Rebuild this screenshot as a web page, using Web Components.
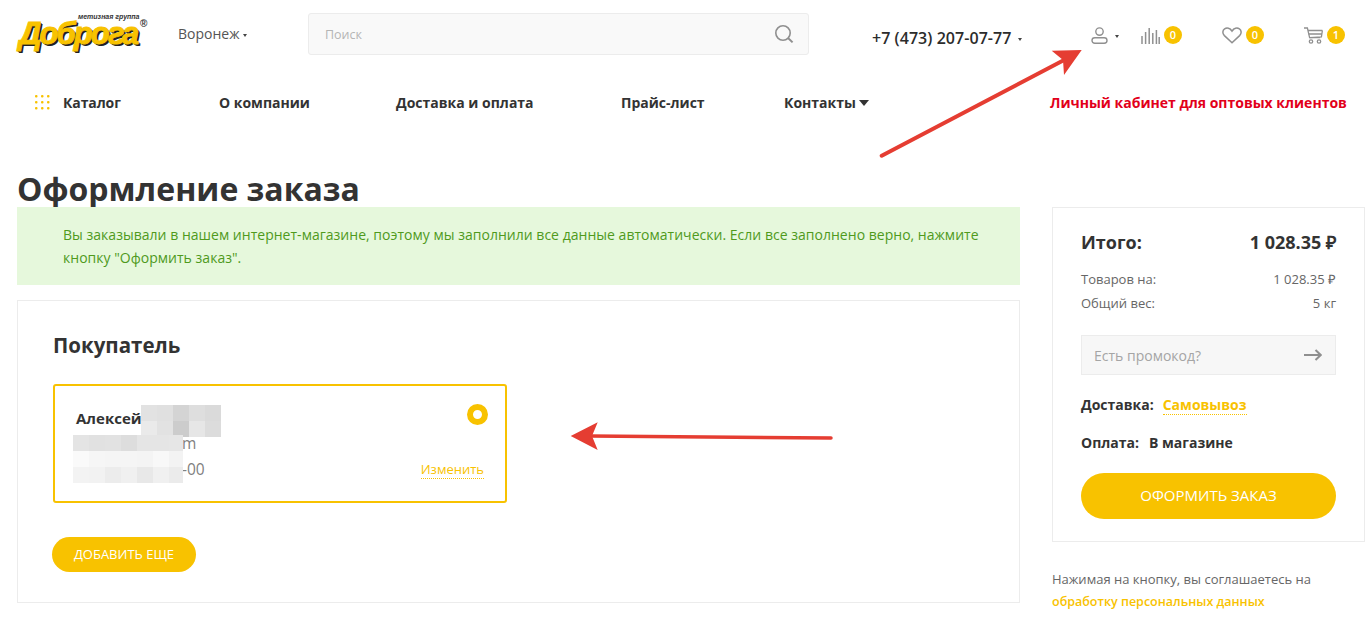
<!DOCTYPE html>
<html lang="ru">
<head>
<meta charset="utf-8">
<title>Оформление заказа</title>
<style>
html, body { margin: 0; padding: 0; background: #fff; }
body { font-family: "Open Sans", "Liberation Sans", sans-serif; color: #333; height: 633px; overflow: hidden; position: relative; }
</style>
</head>
<body>
<site-header></site-header>
<main-nav></main-nav>
<order-page>
  <buyer-card slot="left"></buyer-card>
  <order-summary slot="right"></order-summary>
</order-page>
<annotation-arrows></annotation-arrows>

<script>
const icons = {
  search: '<svg width="20" height="20" viewBox="0 0 20 20" fill="none" stroke="#8f8f8f" stroke-width="1.6"><circle cx="9" cy="9" r="7.2"/><path d="M14 14l4.6 4.4" stroke-width="2"/></svg>',
  user: '<svg width="17" height="17" viewBox="0 0 17 17" fill="none" stroke="#909090" stroke-width="1.4"><circle cx="8.5" cy="4.6" r="3.7"/><rect x="1" y="10.7" width="15" height="5.5" rx="2.75"/></svg>',
  bars: '<svg width="19" height="17" viewBox="0 0 19 17" fill="none" stroke="#909090" stroke-width="1.5"><path d="M1 17v-8M4.6 17V5M8.2 17V1M11.8 17V6M15.4 17V3M18.2 17v-7"/></svg>',
  heart: '<svg width="20" height="17" viewBox="0 0 20 17" fill="none" stroke="#909090" stroke-width="1.5"><path d="M10 15.8L2.4 8.6C.2 6.4.5 3.2 2.6 1.8c2.3-1.4 5.5-.7 7.4 2.3 1.9-3 5.100-3.700 7.400-2.300 2.100 1.400 2.400 4.600.2 6.800z"/></svg>',
  cart: '<svg width="19" height="17" viewBox="0 0 19 17" fill="none" stroke="#909090" stroke-width="1.3"><path d="M0 1h3.400l2.200 9.600h10.600"/><path d="M4 3.500h14.400M4.600 7h13M5.600 10.600l11.800-.6 1-6.500"/><circle cx="7" cy="14.500" r="1.700"/><circle cx="15" cy="14.500" r="1.700"/></svg>'
};

const headerTemplate = document.createElement('template');
headerTemplate.innerHTML = `
  <style>
    :host { display: flex; align-items: center; height: 68px; padding-left: 17px; box-sizing: border-box; }
    .logo { position: relative; width: 131px; height: 40px; margin-top: -2px; flex: none; }
    .logo b {
      position: absolute; left: 2px; top: 8px;
      font: italic 900 31px/26px "Liberation Sans", sans-serif; letter-spacing: -1.9px;
      color: #f8c200;
      text-shadow: 1px 1px 0 #222, 2px 2px 0 #222;
      -webkit-text-stroke: .9px #f8c200;
    }
    .logo i {
      position: absolute; left: 61px; top: 0;
      font: italic 700 7px/8px "Liberation Sans", sans-serif; color: #333; white-space: nowrap;
    }
    .logo u { position: absolute; left: 123px; top: 5px; font: 700 10px/11px "Liberation Sans", sans-serif; color: #333; text-decoration: none; }
    .city { margin-left: 30px; width: 130px; flex: none; font-size: 14px; color: #555; margin-top: -2px; }
    .caret { display: inline-block; width: 0; height: 0; border: 2.500px solid transparent; border-top: 3px solid #444; border-bottom: 0; margin-left: 4px; vertical-align: 2px; }
    .search {
      width: 501px; height: 42px; box-sizing: border-box; flex: none;
      display: flex; align-items: center; justify-content: space-between; padding: 0 14px 0 16px;
      background: #f9f9f9; border: 1px solid #ececec; border-radius: 3px;
      font-size: 12.500px; color: #b5b5b5;
    }
    .search svg { display: block; }
    .phone { margin-left: 63px; width: 219px; flex: none; font-size: 16px; font-weight: 600; color: #2c2c2c; margin-top: 8px; letter-spacing: .05px; }
    .phone .caret { margin-left: 7px; vertical-align: 3px; }
    .tools { display: flex; align-items: flex-start; margin-top: 2px; }
    .tool { display: flex; align-items: flex-start; }
    .tool svg { display: block; }
    .tool.user { width: 50px; }
    .tool.user .caret { margin: 8px 0 0 7px; }
    .tool.bars { width: 81px; }
    .tool.heart { width: 82px; }
    .tool count-badge { margin: -1px 0 0 4px; }
  </style>
  <div class="logo"><b>Доброга</b><i>метизная группа</i><u>®</u></div>
  <div class="city">Воронеж<span class="caret"></span></div>
  <div class="search"><span>Поиск</span>${icons.search}</div>
  <div class="phone">+7 (473) 207-07-77<span class="caret"></span></div>
  <div class="tools">
    <div class="tool user">${icons.user}<span class="caret"></span></div>
    <div class="tool bars">${icons.bars}<count-badge>0</count-badge></div>
    <div class="tool heart">${icons.heart}<count-badge>0</count-badge></div>
    <div class="tool cart">${icons.cart}<count-badge>1</count-badge></div>
  </div>
`;

class SiteHeader extends HTMLElement {
  constructor() {
    super();
    this.attachShadow({ mode: 'open' });
    this.shadowRoot.appendChild(headerTemplate.content.cloneNode(true));
  }
}

class CountBadge extends HTMLElement {
  constructor() {
    super();
    this.attachShadow({ mode: 'open' }).innerHTML = `
      <style>
        :host { display: flex; align-items: center; justify-content: center; width: 18px; height: 18px; border-radius: 50%; background: #f8c200; color: #fff; font-size: 11px; font-weight: 600; line-height: 1; }
      </style>
      <slot></slot>
    `;
  }
}

const navTemplate = document.createElement('template');
navTemplate.innerHTML = `
  <style>
    :host { display: flex; align-items: center; height: 68px; font-size: 14px; font-weight: 700; color: #333; padding-left: 35px; box-sizing: border-box; }
    span { display: block; flex: none; white-space: nowrap; }
    .dots { width: 15px; height: 15px; margin-right: 13px; flex: none; display: block; }
    .catalog { width: 156px; letter-spacing: -.1px; }
    .about { width: 177px; }
    .delivery { width: 225px; }
    .price { width: 163px; }
    .contacts { width: 266px; }
    .contacts::after { content: ""; display: inline-block; border: 5px solid transparent; border-top: 6px solid #333; border-bottom: 0; margin-left: 3px; vertical-align: 2px; }
    .wholesale { color: #e2001a; }
  </style>
  <svg class="dots" viewBox="0 0 15 15" fill="#f8c200">
    <rect x="0" y="0" width="2.500" height="2.500" rx="1"/><rect x="6" y="0" width="2.500" height="2.500" rx="1"/><rect x="12" y="0" width="2.500" height="2.500" rx="1"/>
    <rect x="0" y="6" width="2.500" height="2.500" rx="1"/><rect x="6" y="6" width="2.500" height="2.500" rx="1"/><rect x="12" y="6" width="2.500" height="2.500" rx="1"/>
    <rect x="0" y="12" width="2.500" height="2.500" rx="1"/><rect x="6" y="12" width="2.500" height="2.500" rx="1"/><rect x="12" y="12" width="2.500" height="2.500" rx="1"/>
  </svg>
  <span class="catalog">Каталог</span>
  <span class="about">О компании</span>
  <span class="delivery">Доставка и оплата</span>
  <span class="price">Прайс-лист</span>
  <span class="contacts">Контакты</span>
  <span class="wholesale">Личный кабинет для оптовых клиентов</span>
`;

class MainNav extends HTMLElement {
  constructor() {
    super();
    this.attachShadow({ mode: 'open' });
    this.shadowRoot.appendChild(navTemplate.content.cloneNode(true));
  }
}

const pageTemplate = document.createElement('template');
pageTemplate.innerHTML = `
  <style>
    :host { display: block; padding: 0 7px 0 17px; }
    h1 { margin: 33px 0 0; font-size: 32px; line-height: 40px; font-weight: 700; color: #333; height: 38px; }
    .cols { display: grid; grid-template-columns: 1003px 313px; column-gap: 32px; }
    .notice {
      height: 78px; box-sizing: border-box; padding: 16px 20px 0 46px; margin-bottom: 15px;
      background: #e6f8dc; color: #4f9a1c; font-size: 14px; line-height: 23px; letter-spacing: .02px;
    }
  </style>
  <h1>Оформление заказа</h1>
  <div class="cols">
    <div>
      <div class="notice">Вы заказывали в нашем интернет-магазине, поэтому мы заполнили все данные автоматически. Если все заполнено верно, нажмите кнопку "Оформить заказ".</div>
      <slot name="left"></slot>
    </div>
    <div><slot name="right"></slot></div>
  </div>
`;

class OrderPage extends HTMLElement {
  constructor() {
    super();
    this.attachShadow({ mode: 'open' });
    this.shadowRoot.appendChild(pageTemplate.content.cloneNode(true));
  }
}

// размытые куски на скриншоте, клетка 16px
class MosaicPatch extends HTMLElement {
  constructor() {
    super();
    this.attachShadow({ mode: 'open' });
  }

  connectedCallback() {
    const rows = this.getAttribute('cells').split('|').map(r => r.split(','));
    const cells = rows.flat().map(c => `<div style="background:#${c}${c}${c}"></div>`).join('');
    this.shadowRoot.innerHTML = `
      <style>
        :host { display: grid; position: absolute; grid-template-columns: repeat(${rows[0].length}, 16px); grid-auto-rows: 16px; }
      </style>
      ${cells}
    `;
  }
}

const buyerTemplate = document.createElement('template');
buyerTemplate.innerHTML = `
  <style>
    :host { display: block; height: 303px; box-sizing: border-box; border: 1px solid #ececec; padding: 28px 35px 0; }
    h2 { margin: 0 0 23px; font-size: 20.500px; line-height: 32px; font-weight: 700; color: #333; }
    .address {
      position: relative; width: 454px; height: 119px; box-sizing: border-box;
      border: 2px solid #f8c200; border-radius: 3px; padding: 19px 21px 0;
      font-size: 15.500px; line-height: 25px; color: #808080;
    }
    .name { font-size: 15px; font-weight: 700; color: #333; line-height: 27px; }
    .line { padding-left: 83px; height: 25px; }
    .line.mail { padding-left: 106px; margin-top: -1px; height: 25px; }
    .line.tel { padding-left: 106px; margin-top: 1px; }
    .radio { position: absolute; top: 18px; right: 17px; width: 21px; height: 21px; box-sizing: border-box; border: 6px solid #f8c200; border-radius: 50%; background: #fff; }
    .edit { position: absolute; right: 21px; bottom: 22px; font-size: 13px; line-height: 18px; color: #f8c200; border-bottom: 1px dotted #f8c200; }
    .add {
      display: inline-flex; align-items: center; justify-content: center;
      width: 144px; height: 35px; margin: 34px 0 0 -1px; box-sizing: border-box; padding-bottom: 2px;
      background: #f8c200; color: #fff; border-radius: 18px; font-size: 13px;
    }
    mosaic-patch.n { left: 86px; top: 19px; }
    mosaic-patch.c { left: 18px; top: 49px; clip-path: inset(0 2px 0 0); }
  </style>
  <h2>Покупатель</h2>
  <div class="address">
    <div class="name">Алексей</div>
    <div class="line mail">m</div>
    <div class="line tel">-00</div>
    <mosaic-patch class="n" cells="e2,e0,d4,de,da|ea,e2,cc,e6,dc"></mosaic-patch>
    <mosaic-patch class="c" cells="e4,e1,e2,dd,e5,e5,e6|fa,f6,f5,f5,f4,f8,f3|f3,f2,ec,f0,e8,f0,eb"></mosaic-patch>
    <span class="radio"></span>
    <span class="edit">Изменить</span>
  </div>
  <div class="add">ДОБАВИТЬ ЕЩЕ</div>
`;

class BuyerCard extends HTMLElement {
  constructor() {
    super();
    this.attachShadow({ mode: 'open' });
    this.shadowRoot.appendChild(buyerTemplate.content.cloneNode(true));
  }
}

const summaryTemplate = document.createElement('template');
summaryTemplate.innerHTML = `
  <style>
    :host { display: block; }
    .box { height: 335px; box-sizing: border-box; border: 1px solid #ececec; padding: 21px 28px 0; }
    .row { display: flex; justify-content: space-between; }
    .total { font-size: 18px; line-height: 26px; font-weight: 700; color: #333; margin-bottom: 12px; }
    .small { font-size: 13px; line-height: 24px; color: #666; }
    .promo {
      display: flex; align-items: center; justify-content: space-between;
      height: 40px; box-sizing: border-box; margin: 20px 0 18px; padding: 0 13px 0 12px;
      background: #f7f7f7; border: 1px solid #ececec; font-size: 14px; color: #a5a5a5;
    }
    .promo svg { display: block; }
    .info { font-size: 14px; font-weight: 700; color: #333; line-height: 24px; margin-bottom: 14px; display: flex; }
    .link { color: #f8c200; border-bottom: 1px dotted #f8c200; line-height: 17px; height: 18px; margin: 3px 0 0 9px; }
    .plain { margin-left: 10px; }
    .order {
      display: flex; align-items: center; justify-content: center; box-sizing: border-box;
      height: 46px; margin-top: 18px; border-radius: 23px; padding-bottom: 3px;
      background: #f8c200; color: #fff; font-size: 15px;
    }
    .note { margin: 26px 0 0; font-size: 13px; line-height: 22px; color: #666; }
    .note a { color: #f8c200; font-weight: 600; font-size: 12.500px; text-decoration: none; display: block; margin-top: 1px; }
  </style>
  <div class="box">
    <div class="row total"><span>Итого:</span><span>1 028.35 ₽</span></div>
    <div class="row small"><span>Товаров на:</span><span>1 028.35 ₽</span></div>
    <div class="row small"><span>Общий вес:</span><span>5 кг</span></div>
    <div class="promo"><span>Есть промокод?</span>
      <svg width="18" height="12" viewBox="0 0 18 12" fill="none" stroke="#8f8f8f" stroke-width="2"><path d="M0 6h16.500M11.500 1l5.200 5-5.200 5"/></svg>
    </div>
    <div class="info"><span>Доставка:</span><span class="link">Самовывоз</span></div>
    <div class="info"><span>Оплата:</span><span class="plain">В магазине</span></div>
    <div class="order">ОФОРМИТЬ ЗАКАЗ</div>
  </div>
  <p class="note">Нажимая на кнопку, вы соглашаетесь на<a>обработку персональных данных</a></p>
`;

class OrderSummary extends HTMLElement {
  constructor() {
    super();
    this.attachShadow({ mode: 'open' });
    this.shadowRoot.appendChild(summaryTemplate.content.cloneNode(true));
  }
}

class AnnotationArrows extends HTMLElement {
  constructor() {
    super();
    this.attachShadow({ mode: 'open' }).innerHTML = `
      <style>
        :host { display: block; position: absolute; left: 0; top: 0; width: 1372px; height: 633px; pointer-events: none; }
        svg { display: block; }
      </style>
      <svg width="1372" height="633" viewBox="0 0 1372 633" fill="#e53d32" stroke="none">
        <path d="M881.700 155.700L1066 59" stroke="#e53d32" stroke-width="4" stroke-linecap="round"/>
        <path d="M1081.700 50L1051.700 50.700L1063 60L1064 75z"/>
        <path d="M831 438L590 436" stroke="#e53d32" stroke-width="3.500" stroke-linecap="round"/>
        <path d="M570.700 436L597.700 422.300L592 436L597.700 450z"/>
      </svg>
    `;
  }
}

customElements.define('count-badge', CountBadge);
customElements.define('site-header', SiteHeader);
customElements.define('main-nav', MainNav);
customElements.define('order-page', OrderPage);
customElements.define('mosaic-patch', MosaicPatch);
customElements.define('buyer-card', BuyerCard);
customElements.define('order-summary', OrderSummary);
customElements.define('annotation-arrows', AnnotationArrows);
</script>
</body>
</html>
